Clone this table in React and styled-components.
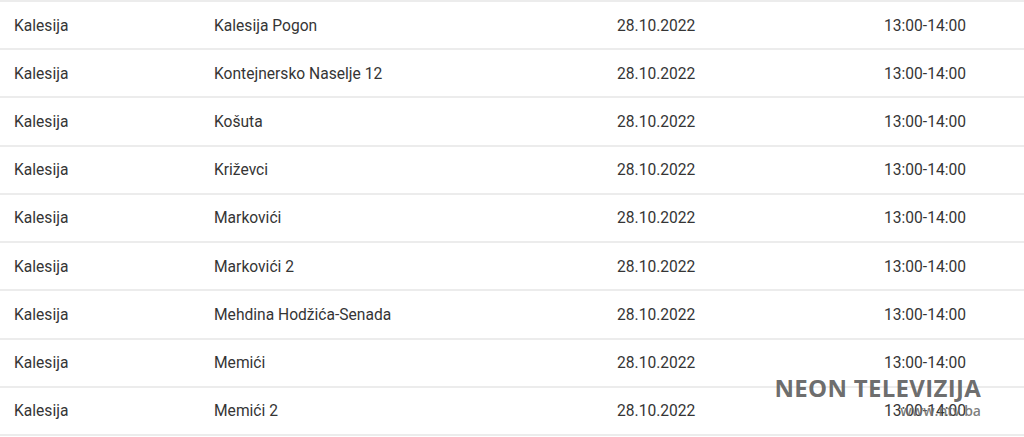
import styled, { createGlobalStyle } from "styled-components"

const Global = createGlobalStyle`
  html, body { margin: 0; padding: 0; background: #fff; }
  body { font-family: Roboto, "Liberation Sans", sans-serif; overflow: hidden; }
`

const Page = styled.div`
  position: relative;
  width: 1024px;
  height: 437px;
  overflow: hidden;
  background: #fff;
`

const Table = styled.div`
  display: flex;
  flex-direction: column;
  border-top: 2px solid #ececec;
`

const Row = styled.div`
  display: grid;
  grid-template-columns: 200px 403px 267px 1fr;
  align-items: center;
  height: 48.22px;
  box-sizing: border-box;
  border-bottom: 2px solid #ececec;
`

const Cell = styled.div`
  padding: 1px 14px 0;
  font-size: 15.6px;
  color: #353535;
  white-space: nowrap;
`

const Watermark = styled.div`
  position: absolute;
  right: 43px;
  top: 373px;
  display: flex;
  flex-direction: column;
  align-items: flex-end;
  color: rgba(95, 95, 95, 0.92);
  font-family: "Open Sans", "Liberation Sans", sans-serif;
  pointer-events: none;
`

const Brand = styled.div`
  font-size: 24px;
  font-weight: 700;
  line-height: 30px;
  letter-spacing: 0.3px;
`

const Site = styled.div`
  font-size: 14px;
  font-weight: 600;
  line-height: 16px;
  color: rgba(110, 110, 110, 0.9);
`

const places = [
  "Kalesija Pogon",
  "Kontejnersko Naselje 12",
  "Košuta",
  "Križevci",
  "Markovići",
  "Markovići 2",
  "Mehdina Hodžića-Senada",
  "Memići",
  "Memići 2",
]

const App = () => {
  return (
    <Page>
      <Global />
      <Table>
        {places.map((p) => (
          <Row key={p}>
            <Cell>Kalesija</Cell>
            <Cell>{p}</Cell>
            <Cell>28.10.2022</Cell>
            <Cell>13:00-14:00</Cell>
          </Row>
        ))}
      </Table>
      <Watermark>
        <Brand>NEON TELEVIZIJA</Brand>
        <Site>www.ntv.ba</Site>
      </Watermark>
    </Page>
  )
}

export default App
